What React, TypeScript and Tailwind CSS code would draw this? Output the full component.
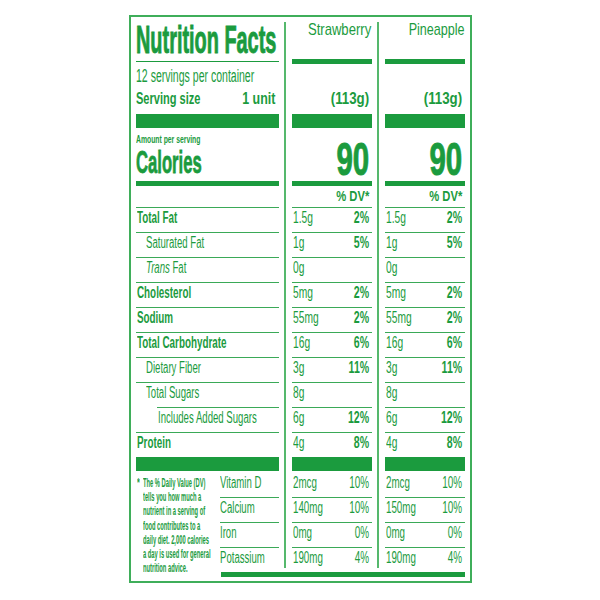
import React from "react";

type Cell = [string, string];

type Nutrient = {
  label: React.ReactNode;
  bold?: boolean;
  indent?: "none" | "one" | "two";
  a: Cell;
  b: Cell;
};

const nutrients: Nutrient[] = [
  { label: "Total Fat", bold: true, a: ["1.5g", "2%"], b: ["1.5g", "2%"] },
  { label: "Saturated Fat", indent: "one", a: ["1g", "5%"], b: ["1g", "5%"] },
  {
    label: (
      <>
        <i>Trans</i> Fat
      </>
    ),
    indent: "one",
    a: ["0g", ""],
    b: ["0g", ""],
  },
  { label: "Cholesterol", bold: true, a: ["5mg", "2%"], b: ["5mg", "2%"] },
  { label: "Sodium", bold: true, a: ["55mg", "2%"], b: ["55mg", "2%"] },
  { label: "Total Carbohydrate", bold: true, a: ["16g", "6%"], b: ["16g", "6%"] },
  { label: "Dietary Fiber", indent: "one", a: ["3g", "11%"], b: ["3g", "11%"] },
  { label: "Total Sugars", indent: "one", a: ["8g", ""], b: ["8g", ""] },
  { label: "Includes Added Sugars", indent: "two", a: ["6g", "12%"], b: ["6g", "12%"] },
  { label: "Protein", bold: true, a: ["4g", "8%"], b: ["4g", "8%"] },
];

const vitamins: { label: string; a: Cell; b: Cell }[] = [
  { label: "Vitamin D", a: ["2mcg", "10%"], b: ["2mcg", "10%"] },
  { label: "Calcium", a: ["140mg", "10%"], b: ["150mg", "10%"] },
  { label: "Iron", a: ["0mg", "0%"], b: ["0mg", "0%"] },
  { label: "Potassium", a: ["190mg", "4%"], b: ["190mg", "4%"] },
];

const footnote = [
  "The % Daily Value (DV)",
  "tells you how much a",
  "nutrient in a serving of",
  "food contributes to a",
  "daily diet. 2,000 calories",
  "a day is used for general",
  "nutrition advice.",
];

// condensed look: the label face is a condensed grotesque, so squeeze Liberation Sans
function T({ children, className = "" }: { children: React.ReactNode; className?: string }) {
  return <span className={"inline-block whitespace-nowrap " + className}>{children}</span>;
}

function Divider() {
  return (
    <div className="flex w-[13px] shrink-0 justify-center">
      <div className="w-[2px] bg-[#55b86c]" />
    </div>
  );
}

function Row({ left, mid, right }: { left: React.ReactNode; mid: React.ReactNode; right: React.ReactNode }) {
  return (
    <div className="flex">
      <div className="w-[143px] shrink-0">{left}</div>
      <Divider />
      <div className="w-[80px] shrink-0">{mid}</div>
      <Divider />
      <div className="w-[80px] shrink-0">{right}</div>
    </div>
  );
}

function Bar({ h }: { h: "thick" | "thin" }) {
  return <div className={(h === "thick" ? "h-[14px]" : "h-[5px]") + " bg-[#1b9b3e]"} />;
}

function Amount({ v }: { v: Cell }) {
  return (
    <div className="flex h-[25px] border-t border-[#3aa957] text-[16px] leading-[19px]">
      <div className="min-w-0 flex-1 pl-[1px]">
        <T className="origin-left scale-x-[0.64]">{v[0]}</T>
      </div>
      <div className="flex shrink-0 justify-end pr-[2px] font-bold">
        <T className="origin-right scale-x-[0.66]">{v[1]}</T>
      </div>
    </div>
  );
}

function VitAmount({ v, cls }: { v: Cell; cls: string }) {
  return (
    <div className={"flex text-[16px] leading-[20px] " + cls}>
      <div className="min-w-0 flex-1 pl-[1px]">
        <T className="origin-left scale-x-[0.61]">{v[0]}</T>
      </div>
      <div className="flex shrink-0 justify-end pr-[2px]">
        <T className="origin-right scale-x-[0.62]">{v[1]}</T>
      </div>
    </div>
  );
}

export default function App() {
  return (
    <div className="flex h-[600px] w-[600px] items-start justify-center bg-white pt-[15px]">
      <div className="w-[343px] border-2 border-[#3fae5a] px-[5px] pt-[5px] pb-[4px] font-['Liberation_Sans',Arial,sans-serif] text-[#1b9b3e]">
        {/* header */}
        <Row
          left={
            <div className="h-[92px]">
              <div className="h-[36px] text-[39px] font-bold leading-[36px] [-webkit-text-stroke:1px_#1b9b3e]">
                <T className="origin-left scale-x-[0.51]">Nutrition Facts</T>
              </div>
              <div className="mt-[3px] h-px bg-[#1b9b3e]" />
              <div className="mt-[4px] h-[20px] text-[18px] leading-[20px]">
                <T className="origin-left scale-x-[0.585]">12 servings per container</T>
              </div>
              <div className="mt-[3px] grid h-[20px] grid-cols-2 text-[17px] font-bold leading-[20px]">
                <div>
                  <T className="origin-left scale-x-[0.65]">Serving size</T>
                </div>
                <div className="flex justify-end pr-[3px]">
                  <T className="origin-right scale-x-[0.73]">1 unit</T>
                </div>
              </div>
            </div>
          }
          mid={
            <div className="h-[92px]">
              <div className="flex h-[16px] justify-end text-[17px] leading-[16px]">
                <T className="origin-right scale-x-[0.77]">Strawberry</T>
              </div>
              <div className="mt-[21px] h-[5px] bg-[#1b9b3e]" />
              <div className="mt-[25px] flex h-[20px] justify-end pr-[2px] text-[17px] font-bold leading-[20px]">
                <T className="origin-right scale-x-[0.78]">(113g)</T>
              </div>
            </div>
          }
          right={
            <div className="h-[92px]">
              <div className="flex h-[16px] justify-end text-[17px] leading-[16px]">
                <T className="origin-right scale-x-[0.74]">Pineapple</T>
              </div>
              <div className="mt-[21px] h-[5px] bg-[#1b9b3e]" />
              <div className="mt-[25px] flex h-[20px] justify-end pr-[2px] text-[17px] font-bold leading-[20px]">
                <T className="origin-right scale-x-[0.78]">(113g)</T>
              </div>
            </div>
          }
        />
        <Row left={<Bar h="thick" />} mid={<Bar h="thick" />} right={<Bar h="thick" />} />

        {/* calories */}
        <Row
          left={
            <div className="h-[53px] pt-[5px]">
              <div className="h-[12px] text-[11px] font-bold leading-[12px]">
                <T className="origin-left scale-x-[0.62]">Amount per serving</T>
              </div>
              <div className="mt-[2px] h-[30px] text-[32px] font-bold leading-[30px] [-webkit-text-stroke:0.8px_#1b9b3e]">
                <T className="origin-left scale-x-[0.52]">Calories</T>
              </div>
            </div>
          }
          mid={
            <div className="flex h-[53px] items-start justify-end pt-[11px] pr-[2px] text-[46px] font-bold leading-[40px] [-webkit-text-stroke:1px_#1b9b3e]">
              <T className="origin-right scale-x-[0.64]">90</T>
            </div>
          }
          right={
            <div className="flex h-[53px] items-start justify-end pt-[11px] pr-[2px] text-[46px] font-bold leading-[40px] [-webkit-text-stroke:1px_#1b9b3e]">
              <T className="origin-right scale-x-[0.64]">90</T>
            </div>
          }
        />
        <Row left={<Bar h="thin" />} mid={<Bar h="thin" />} right={<Bar h="thin" />} />
        <Row
          left={<div className="h-[21px]" />}
          mid={
            <div className="flex h-[21px] items-start justify-end pt-[2px] pr-[2px] text-[14px] font-bold leading-[16px]">
              <T className="origin-right scale-x-[0.8]">% DV*</T>
            </div>
          }
          right={
            <div className="flex h-[21px] items-start justify-end pt-[2px] pr-[2px] text-[14px] font-bold leading-[16px]">
              <T className="origin-right scale-x-[0.8]">% DV*</T>
            </div>
          }
        />

        {/* nutrients */}
        {nutrients.map((n, i) => (
          <Row
            key={i}
            left={
              n.indent === "two" ? (
                <div className="h-[25px] pl-[21px]">
                  <div className="h-[25px] border-t border-[#3aa957] pl-[1px] text-[16px] leading-[19px]">
                    <T className="origin-left scale-x-[0.6]">{n.label}</T>
                  </div>
                </div>
              ) : (
                <div
                  className={
                    "h-[25px] border-t border-[#3aa957] text-[16px] leading-[19px] " +
                    (n.indent === "one" ? "pl-[10px] " : "pl-[1px] ") +
                    (n.bold ? "font-bold" : "")
                  }
                >
                  <T className={"origin-left " + (n.bold ? "scale-x-[0.615]" : "scale-x-[0.6]")}>{n.label}</T>
                </div>
              )
            }
            mid={<Amount v={n.a} />}
            right={<Amount v={n.b} />}
          />
        ))}
        <Row left={<Bar h="thick" />} mid={<Bar h="thick" />} right={<Bar h="thick" />} />

        {/* vitamins + footnote */}
        <div className="flex">
          <div className="flex w-[84px] shrink-0 pt-[5px] pl-[1px] text-[12px] font-bold leading-[14.2px]">
            <div className="w-[6px] shrink-0">
              <T className="origin-left scale-x-[0.6]">*</T>
            </div>
            <div>
              {footnote.map((l, i) => (
                <div key={i} className="h-[14.2px] whitespace-nowrap">
                  <T className="origin-left scale-x-[0.48]">{l}</T>
                </div>
              ))}
            </div>
          </div>
          <div className="w-[245px] shrink-0">
            {vitamins.map((v, i) => {
              const cls =
                i === 0
                  ? "h-[26px] pt-[2px]"
                  : i === 3
                  ? "h-[21px] border-t border-[#3aa957]"
                  : "h-[25px] border-t border-[#3aa957]";
              return (
                <div key={i} className="flex">
                  <div className={"w-[59px] shrink-0 text-[16px] leading-[20px] " + cls}>
                    <T className="origin-left scale-x-[0.6]">{v.label}</T>
                  </div>
                  <Divider />
                  <div className="w-[80px] shrink-0">
                    <VitAmount v={v.a} cls={cls} />
                  </div>
                  <Divider />
                  <div className="w-[80px] shrink-0">
                    <VitAmount v={v.b} cls={cls} />
                  </div>
                </div>
              );
            })}
            <div className="mt-[4px] ml-[1px] h-[5px] bg-[#1b9b3e]" />
          </div>
        </div>
      </div>
    </div>
  );
}
